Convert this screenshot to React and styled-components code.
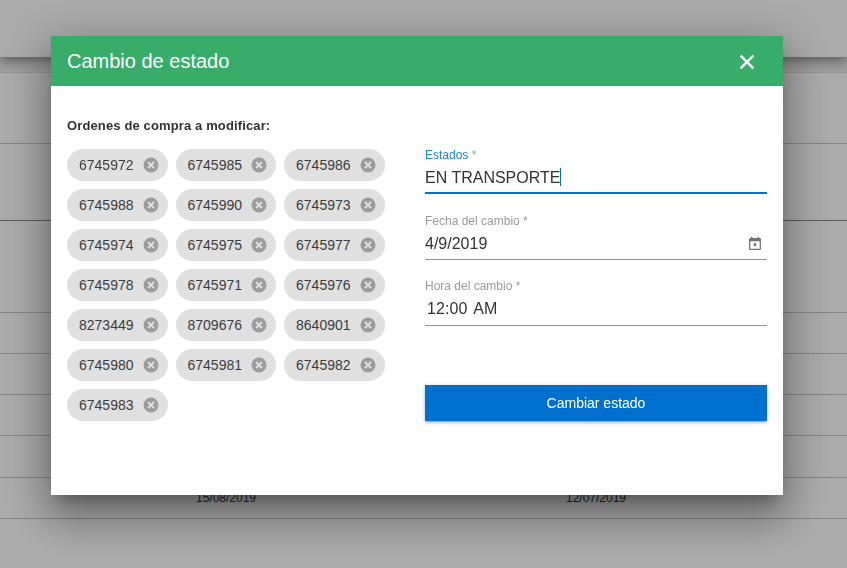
import React from 'react';
import styled, { createGlobalStyle } from 'styled-components';

const GlobalStyle = createGlobalStyle`
  html, body {
    margin: 0;
    height: 100%;
    overflow: hidden;
    background: #fff;
    font-family: "Liberation Sans", Arial, sans-serif;
  }
`;

const chips = [
  '6745972', '6745985', '6745986', '6745988', '6745990', '6745973',
  '6745974', '6745975', '6745977', '6745978', '6745971', '6745976',
  '8273449', '8709676', '8640901', '6745980', '6745981', '6745982',
  '6745983',
];

// pagina de fondo
const Page = styled.div`
  height: 568px;
  overflow: hidden;
`;
const TopBar = styled.div`
  height: 57px;
  box-shadow: 0 3px 13px rgba(0, 0, 0, 0.5);
  position: relative;
`;
const Band = styled.div`
  height: 16px;
  box-sizing: border-box;
  background: #f0f0f0;
  border-bottom: 1px solid #e0e0e0;
`;
const Row = styled.div`
  height: ${(props) => props.$height}px;
  border-bottom: 1px solid ${(props) => (props.$strong ? '#8a8a8a' : '#c4c4c4')};
  box-sizing: border-box;
  display: grid;
  grid-template-columns: 370px 370px;
  padding-left: 41px;
  align-items: end;
  justify-items: center;
  font-size: 12px;
  color: #333;
`;
const RowDate = styled.span`
  padding-bottom: 13px;
`;

// modal
const Backdrop = styled.div`
  position: fixed;
  inset: 0;
  background: rgba(0, 0, 0, 0.33);
`;
const Modal = styled.div`
  position: fixed;
  left: 51px;
  top: 36px;
  width: 732px;
  height: 459px;
  background: #fff;
  box-shadow: 0 11px 15px -7px rgba(0, 0, 0, 0.3), 0 24px 38px 3px rgba(0, 0, 0, 0.22), 0 9px 46px 8px rgba(0, 0, 0, 0.2);
`;
const Header = styled.div`
  height: 50px;
  background: #38ad6a;
  display: flex;
  align-items: center;
  justify-content: space-between;
  padding: 0 0 0 16px;
`;
const Title = styled.h2`
  margin: 0;
  font-size: 20px;
  font-weight: 400;
  color: #fff;
`;
const CloseButton = styled.button`
  width: 48px;
  height: 48px;
  margin-right: 12px;
  padding: 2px 0 0;
  border: 0;
  background: none;
  display: flex;
  align-items: center;
  justify-content: center;
  color: #fff;
`;
const Body = styled.div`
  display: grid;
  grid-template-columns: 342px 342px;
  column-gap: 16px;
  padding: 32px 16px 0;
`;
const Heading = styled.div`
  font-size: 13px;
  font-weight: 700;
  line-height: 16px;
  letter-spacing: 0.13px;
  color: #333;
  margin-bottom: 15px;
`;
const ChipList = styled.div`
  display: flex;
  flex-wrap: wrap;
  gap: 8px;
`;
const Chip = styled.div`
  height: 32px;
  border-radius: 16px;
  background: #e0e0e0;
  display: flex;
  align-items: center;
  padding-left: 12px;
  font-size: 14px;
  color: #3c3c3c;
`;
const ChipDelete = styled.svg`
  width: 18px;
  height: 18px;
  margin-left: 8px;
  margin-right: 8px;
`;
const Form = styled.div`
  display: flex;
  flex-direction: column;
  padding-top: 30px;
`;
const Field = styled.div`
  display: flex;
  flex-direction: column;
  height: ${(props) => props.$height}px;
`;
const Label = styled.label`
  font-size: 12px;
  line-height: 14px;
  color: ${(props) => (props.$focused ? '#1c87d8' : '#9a9a9a')};
`;
const Asterisk = styled.span`
  color: ${(props) => (props.$focused ? '#6ec28f' : '#9a9a9a')};
`;
const InputRow = styled.div`
  display: flex;
  align-items: center;
  justify-content: space-between;
  height: ${(props) => (props.$time ? '33px' : '32px')};
  box-sizing: border-box;
  padding-left: ${(props) => (props.$time ? '2px' : '0')};
  font-size: 16px;
  letter-spacing: ${(props) => (props.$time ? '0.1px' : '0')};
  word-spacing: ${(props) => (props.$time ? '2px' : '0')};
  color: #333;
  border-bottom: ${(props) => (props.$focused ? '2px solid #0070cf' : '1px solid #919191')};
`;
const Caret = styled.span`
  display: inline-block;
  width: 1px;
  height: 18px;
  background: #0070cf;
  vertical-align: -3px;
`;
const CalendarIcon = styled.svg`
  width: 16px;
  height: 16px;
  margin-right: 4px;
  fill: #757575;
`;
const SubmitButton = styled.button`
  margin-top: 40px;
  height: 36px;
  border: 0;
  padding: 0;
  background: #0070cf;
  color: #fff;
  font-family: "Liberation Sans", Arial, sans-serif;
  font-size: 14px;
  box-shadow: 0 1px 5px rgba(0, 0, 0, 0.2), 0 2px 2px rgba(0, 0, 0, 0.14), 0 3px 1px -2px rgba(0, 0, 0, 0.12);
`;

const App = () => (
  <>
    <GlobalStyle />
    <Page>
      <TopBar />
      <Band />
      <Row $height={71} />
      <Row $height={77} $strong />
      <Row $height={92} />
      <Row $height={41} />
      <Row $height={41} />
      <Row $height={41} />
      <Row $height={42} />
      <Row $height={41}>
        <RowDate>15/08/2019</RowDate>
        <RowDate>12/07/2019</RowDate>
      </Row>
    </Page>
    <Backdrop />
    <Modal>
      <Header>
        <Title>Cambio de estado</Title>
        <CloseButton aria-label="Cerrar">
          <svg width="24" height="24" viewBox="0 0 24 24" fill="none" stroke="currentColor" strokeWidth="2.5">
            <path d="M5.6 5.6 18.4 18.4M18.4 5.6 5.6 18.4" />
          </svg>
        </CloseButton>
      </Header>
      <Body>
        <div>
          <Heading>Ordenes de compra a modificar:</Heading>
          <ChipList>
            {chips.map((chip) => (
              <Chip key={chip}>
                {chip}
                <ChipDelete viewBox="0 0 24 24">
                  <circle cx="12" cy="12" r="10" fill="#9c9c9c" />
                  <path d="M8 8 16 16M16 8 8 16" fill="none" stroke="#e0e0e0" strokeWidth="2.6" />
                </ChipDelete>
              </Chip>
            ))}
          </ChipList>
        </div>
        <Form>
          <Field $height={66}>
            <Label $focused>Estados <Asterisk $focused>*</Asterisk></Label>
            <InputRow $focused>
              <span>EN TRANSPORTE<Caret /></span>
            </InputRow>
          </Field>
          <Field $height={65}>
            <Label>Fecha del cambio <Asterisk>*</Asterisk></Label>
            <InputRow>
              <span>4/9/2019</span>
              <CalendarIcon viewBox="0 0 24 24">
                <path d="M14 11h-4v4h4v-4zM16 1v2H8V1H6v2H5c-1.11 0-1.99.9-1.99 2L3 19c0 1.1.89 2 2 2h14c1.1 0 2-.9 2-2V5c0-1.1-.9-2-2-2h-1V1h-2zm3 18H5V8h14v11z" />
              </CalendarIcon>
            </InputRow>
          </Field>
          <Field $height={66}>
            <Label>Hora del cambio <Asterisk>*</Asterisk></Label>
            <InputRow $time>
              <span>12:00 AM</span>
            </InputRow>
          </Field>
          <SubmitButton>Cambiar estado</SubmitButton>
        </Form>
      </Body>
    </Modal>
  </>
);

export default App;
